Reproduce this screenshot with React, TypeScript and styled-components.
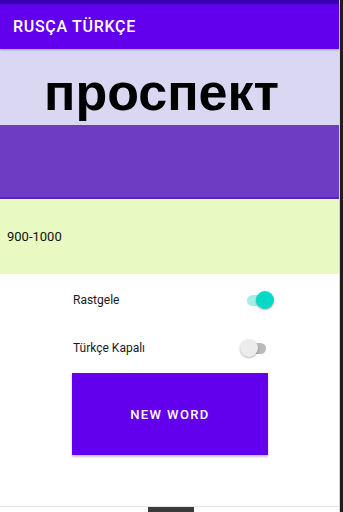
import React from 'react';
import styled, { createGlobalStyle } from 'styled-components';

const GlobalStyle = createGlobalStyle`
  html, body {
    margin: 0;
    padding: 0;
    background: #ffffff;
    font-family: Roboto, "Noto Sans", sans-serif;
  }
`;

const Screen = styled.div`
  width: 343px;
  height: 512px;
  display: flex;
  overflow: hidden;
  background: #ffffff;
`;

const Phone = styled.div`
  flex: 1;
  display: flex;
  flex-direction: column;
  border-right: 1px solid #d4d4d4;
`;

const Edge = styled.div`
  width: 3px;
  background: #1e1e1e;
`;

const StatusBar = styled.div`
  height: 4px;
  background: #3700b3;
`;

const Toolbar = styled.div`
  height: 45px;
  background: #6200ee;
  display: flex;
  align-items: center;
  padding-left: 13px;
  color: #ffffff;
  font-size: 16px;
  font-weight: 500;
  letter-spacing: 0.7px;
  box-shadow: 0 1px 2px rgba(0, 0, 0, 0.25);
  position: relative;
`;

const Band = styled.div<{ $bg: string; $h: number }>`
  height: ${(p) => p.$h}px;
  background: ${(p) => p.$bg};
  display: flex;
  align-items: center;
`;

const Word = styled.div`
  width: 100%;
  text-align: center;
  font-family: "Liberation Sans", Arial, sans-serif;
  font-weight: 700;
  font-size: 52px;
  line-height: 1;
  color: #000000;
  margin-top: 10px;
  padding-right: 16px;
`;

const PurpleBand = styled(Band)`
  border-bottom: 2px solid #5a22b0;
`;

const Range = styled.div`
  padding-left: 7px;
  font-size: 13px;
  color: #111111;
`;

const Content = styled.div`
  flex: 1;
  display: flex;
  flex-direction: column;
  padding: 14px 71px 0 73px;
`;

const Row = styled.div`
  height: 24px;
  display: flex;
  align-items: center;
  justify-content: space-between;
  font-size: 12px;
  color: #1a1a1a;
  & + & {
    margin-top: 24px;
  }
`;

const Switch = styled.div<{ $on: boolean }>`
  position: relative;
  width: 25px;
  height: 11px;
  margin-right: ${(p) => (p.$on ? '-4px' : '2px')};
  border-radius: 6px;
  background: ${(p) => (p.$on ? '#a8ece5' : '#b9b9b9')};
  &::after {
    content: '';
    position: absolute;
    top: -4px;
    ${(p) => (p.$on ? 'right: -2px;' : 'left: -1px;')}
    width: 18px;
    height: 18px;
    border-radius: 50%;
    background: ${(p) => (p.$on ? '#03dac5' : '#ececec')};
    box-shadow: 0 1px 2px rgba(0, 0, 0, 0.3);
  }
`;

const Button = styled.button`
  margin-top: 13px;
  margin-left: -1px;
  height: 82px;
  border: none;
  background: #6200ee;
  color: #ffffff;
  font-family: Roboto, "Noto Sans", sans-serif;
  font-size: 13px;
  font-weight: 500;
  letter-spacing: 1.4px;
  box-shadow: 0 2px 2px rgba(0, 0, 0, 0.25);
`;

const NavBar = styled.div`
  margin-top: auto;
  height: 5px;
  border-top: 1px solid #e4e4e4;
  display: flex;
  justify-content: center;
`;

const NavHandle = styled.div`
  width: 46px;
  height: 5px;
  margin-left: 2px;
  background: #3a3a3a;
`;

export default function App() {
  return (
    <>
      <GlobalStyle />
      <Screen>
        <Phone>
          <StatusBar />
          <Toolbar>RUSÇA TÜRKÇE</Toolbar>
          <Band $bg="#d9d7f1" $h={76}>
            <Word>проспект</Word>
          </Band>
          <PurpleBand $bg="#6e3bc3" $h={72} />
          <Band $bg="#e8f9c1" $h={75}>
            <Range>900-1000</Range>
          </Band>
          <Content>
            <Row>
              <span>Rastgele</span>
              <Switch $on />
            </Row>
            <Row>
              <span>Türkçe Kapalı</span>
              <Switch $on={false} />
            </Row>
            <Button>NEW WORD</Button>
          </Content>
          <NavBar>
            <NavHandle />
          </NavBar>
        </Phone>
        <Edge />
      </Screen>
    </>
  );
}
